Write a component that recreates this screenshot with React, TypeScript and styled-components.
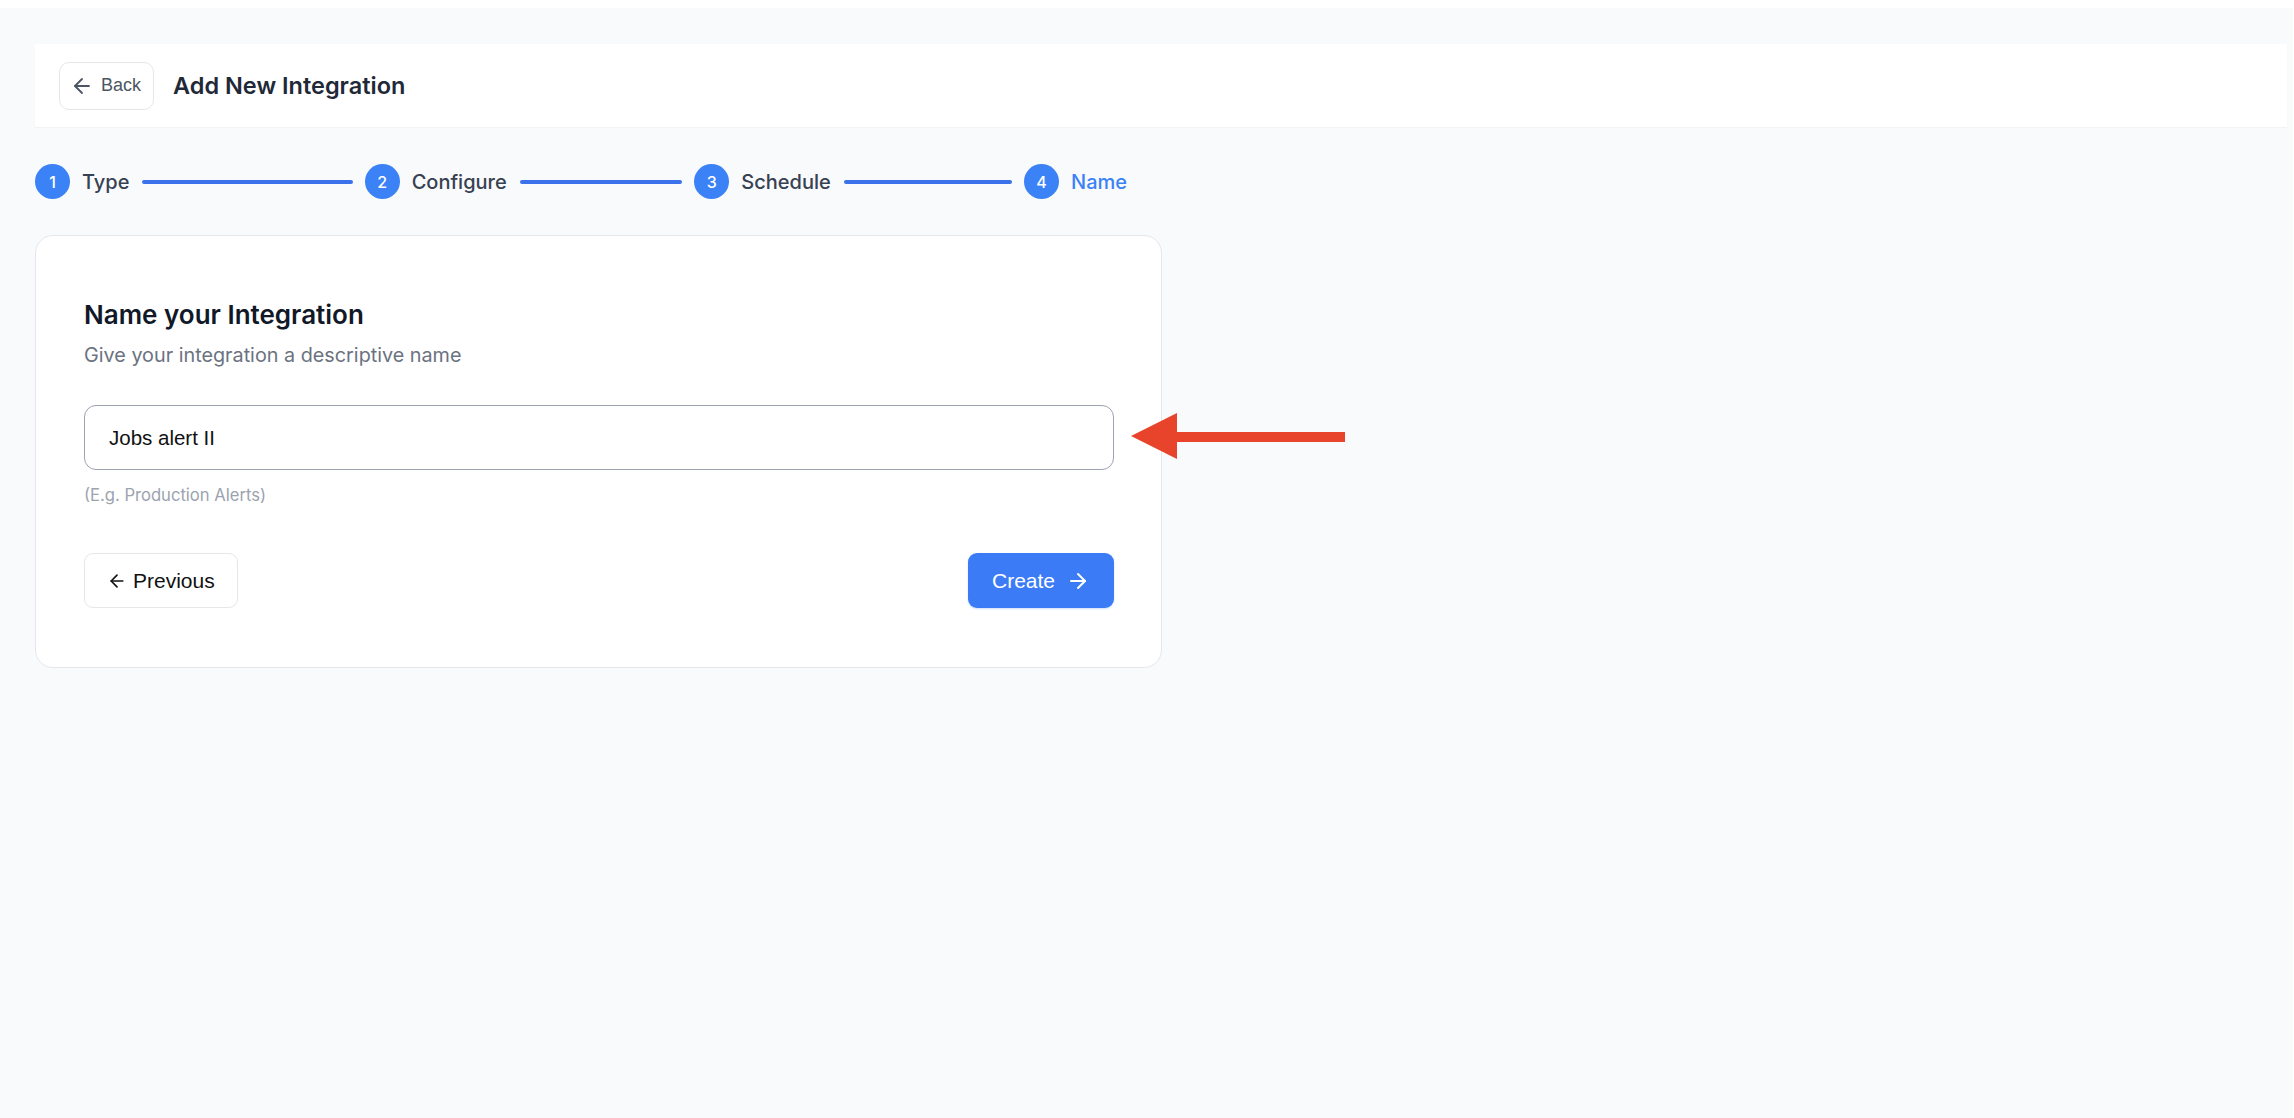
import React, { useState } from "react";
import styled, { createGlobalStyle } from "styled-components";
import { ArrowLeft, ArrowRight } from "lucide-react";

const GlobalStyle = createGlobalStyle`
  html, body {
    margin: 0;
    padding: 0;
    background: #ffffff;
  }
  body {
    font-family: "Inter", "Noto Sans", sans-serif;
    color: #111827;
  }
  * {
    box-sizing: border-box;
  }
`;

const steps = ["Type", "Configure", "Schedule", "Name"];

export default function App() {
  const [name, setName] = useState("Jobs alert II");
  const current = 3;

  return (
    <>
      <GlobalStyle />
      <Page>
        <Header>
          <BackButton>
            <ArrowLeft size={24} strokeWidth={1.8} />
            <span>Back</span>
          </BackButton>
          <Title>Add New Integration</Title>
        </Header>

        <Stepper>
          {steps.map((label, i) => (
            <Step key={label} last={i === steps.length - 1}>
              <StepCircle>{i + 1}</StepCircle>
              <StepLabel active={i === current}>{label}</StepLabel>
              {i < steps.length - 1 && <StepLine />}
            </Step>
          ))}
        </Stepper>

        <CardRow>
          <Card>
            <Heading>Name your Integration</Heading>
            <SubText>Give your integration a descriptive name</SubText>
            <NameInput value={name} onChange={(e) => setName(e.target.value)} />
            <Hint>(E.g. Production Alerts)</Hint>
            <Actions>
              <OutlineButton>
                <ArrowLeft size={20} strokeWidth={2} />
                <span>Previous</span>
              </OutlineButton>
              <PrimaryButton>
                <span>Create</span>
                <ArrowRight size={24} strokeWidth={2} />
              </PrimaryButton>
            </Actions>
          </Card>

          <Pointer width="214" height="48" viewBox="0 0 214 48">
            <rect x="44" y="19" width="170" height="10" fill="#e8432b" />
            <polygon points="0,23 46,0 46,46" fill="#e8432b" />
          </Pointer>
        </CardRow>
      </Page>
    </>
  );
}

const Page = styled.div`
  margin-top: 8px;
  margin-right: 1px;
  min-height: 1110px;
  background: #f9fafb;
  padding: 36px 6px 0 35px;
`;

const Header = styled.div`
  display: flex;
  align-items: center;
  gap: 19px;
  height: 83px;
  padding: 0 24px;
  background: #ffffff;
  box-shadow: 0 1px 1px rgba(17, 24, 39, 0.03);
`;

const BackButton = styled.button`
  display: flex;
  align-items: center;
  gap: 7px;
  height: 48px;
  padding: 0 12px 0 10px;
  background: #ffffff;
  border: 1px solid #e5e7eb;
  border-radius: 10px;
  color: #4b5563;
  font-family: "Liberation Sans", Arial, sans-serif;
  font-size: 18px;
  cursor: pointer;
`;

const Title = styled.h1`
  margin: 0;
  font-size: 23.5px;
  font-weight: 600;
  color: #1f2937;
`;

const Stepper = styled.div`
  display: flex;
  align-items: center;
  width: 1092px;
  margin: 37px 0 36px;
`;

const Step = styled.div<{ last?: boolean }>`
  display: flex;
  align-items: center;
  flex: ${(p) => (p.last ? "0 0 auto" : "1 1 0")};
`;

const StepCircle = styled.div`
  display: flex;
  align-items: center;
  justify-content: center;
  width: 35px;
  height: 35px;
  border-radius: 50%;
  background: #3b82f6;
  color: #ffffff;
  font-size: 16px;
  font-weight: 500;
  flex-shrink: 0;
`;

const StepLabel = styled.span<{ active?: boolean }>`
  margin-left: 12px;
  font-size: 20px;
  font-weight: 500;
  color: ${(p) => (p.active ? "#3b82f6" : "#374151")};
  white-space: nowrap;
`;

const StepLine = styled.div`
  flex: 1;
  height: 4px;
  margin: 0 12px 0 13px;
  border-radius: 2px;
  background: #3b72ec;
`;

const CardRow = styled.div`
  display: flex;
  align-items: flex-start;
`;

const Card = styled.div`
  display: flex;
  flex-direction: column;
  width: 1127px;
  padding: 62px 47px 59px 48px;
  background: #ffffff;
  border: 1px solid #e5e7eb;
  border-radius: 18px;
`;

const Heading = styled.h2`
  margin: 0;
  font-size: 26px;
  line-height: 33px;
  font-weight: 600;
  color: #111827;
`;

const SubText = styled.p`
  margin: 10px 0 0;
  font-size: 19.8px;
  line-height: 28px;
  color: #6b7280;
`;

const NameInput = styled.input`
  margin-top: 36px;
  height: 65px;
  width: 100%;
  padding: 0 24px;
  border: 1px solid #9ca3af;
  border-radius: 12px;
  background: #ffffff;
  font-family: "Liberation Sans", Arial, sans-serif;
  font-size: 20.5px;
  color: #111111;
  outline: none;
`;

const Hint = styled.span`
  margin-top: 13px;
  font-size: 16.6px;
  line-height: 24px;
  color: #9ca3af;
`;

const Actions = styled.div`
  display: flex;
  justify-content: space-between;
  align-items: center;
  margin-top: 46px;
`;

const BaseButton = styled.button`
  display: flex;
  align-items: center;
  height: 55px;
  padding: 0 24px;
  border-radius: 9px;
  font-family: "Liberation Sans", Arial, sans-serif;
  font-size: 21px;
  cursor: pointer;
`;

const OutlineButton = styled(BaseButton)`
  gap: 6px;
  padding: 0 22px 0 22px;
  background: #ffffff;
  border: 1px solid #e5e7eb;
  color: #111111;
`;

const PrimaryButton = styled(BaseButton)`
  gap: 11px;
  padding: 0 24px 0 24px;
  background: #3b7cf6;
  border: none;
  color: #ffffff;
  box-shadow: 0 1px 2px rgba(59, 124, 246, 0.25);
`;

const Pointer = styled.svg`
  margin-top: 178px;
  margin-left: -31px;
  flex-shrink: 0;
`;
